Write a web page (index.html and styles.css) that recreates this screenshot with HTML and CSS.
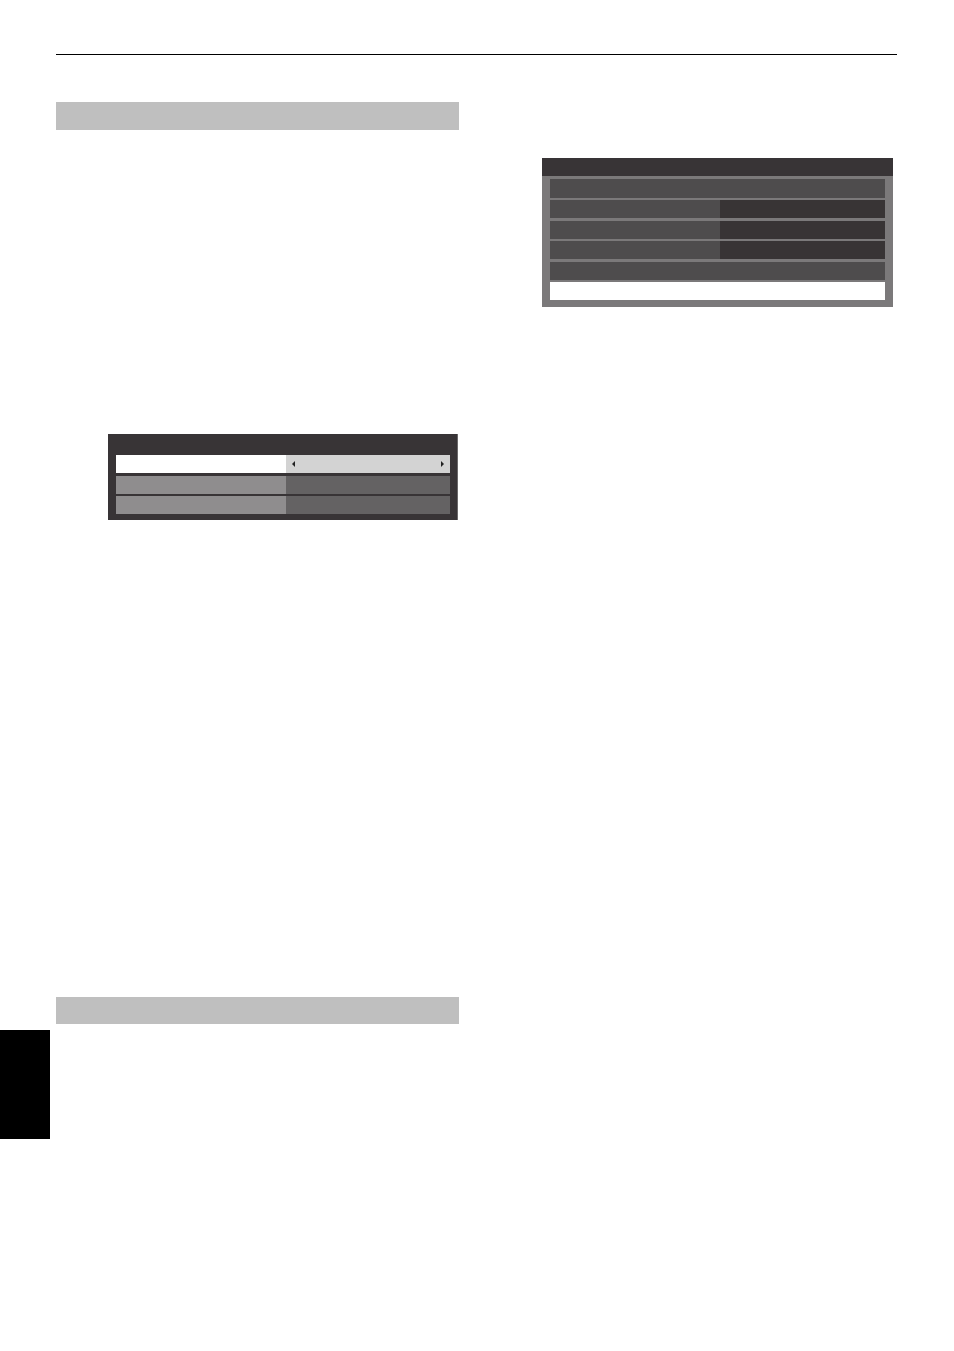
FILE: index.html
```html
<!DOCTYPE html>
<html lang="en">
<head>
  <meta charset="UTF-8">
  <meta name="viewport" content="width=device-width, initial-scale=1.0">
  <title>Manual page</title>
  <link rel="stylesheet" href="styles.css">
</head>
<body>
  <div class="page">
    <div class="rule"></div>
    <div class="columns">
      <div class="rail">
        <div class="tab"></div>
      </div>

      <div class="col-left">
        <div class="heading-bar"></div>

        <div class="menu-small">
          <div class="menu-row">
            <div class="cell-label active"></div>
            <div class="cell-value select">
              <span class="arrow arrow-left"></span>
              <span class="arrow arrow-right"></span>
            </div>
          </div>
          <div class="menu-row">
            <div class="cell-label"></div>
            <div class="cell-value"></div>
          </div>
          <div class="menu-row">
            <div class="cell-label"></div>
            <div class="cell-value"></div>
          </div>
        </div>

        <div class="heading-bar second"></div>
      </div>

      <div class="col-right">
        <div class="menu-large">
          <div class="menu-title"></div>
          <div class="menu-body">
            <div class="wide-row first"></div>
            <div class="split-row">
              <div class="split-label"></div>
              <div class="split-value"></div>
            </div>
            <div class="split-row">
              <div class="split-label"></div>
              <div class="split-value"></div>
            </div>
            <div class="split-row">
              <div class="split-label"></div>
              <div class="split-value"></div>
            </div>
            <div class="wide-row"></div>
            <div class="wide-row highlight"></div>
          </div>
        </div>
      </div>
    </div>
  </div>
</body>
</html>
```

FILE: styles.css
```css
body {
  margin: 0;
  padding: 0;
  background: #fff;
  font-family: "Liberation Sans", Arial, sans-serif;
}
.page {
  width: 954px;
  height: 1351px;
  padding-top: 54px;
  box-sizing: border-box;
}
.rule {
  margin: 0 57px 0 56px;
  border-top: 1px solid #000;
}
.columns {
  display: flex;
}
.rail {
  width: 50px;
  flex: none;
}
.tab {
  margin-top: 975px;
  height: 109px;
  background: #000;
}
.col-left {
  width: 403px;
  margin-left: 6px;
  flex: none;
}
.col-right {
  width: 351px;
  margin-left: 83px;
  flex: none;
}
.heading-bar {
  margin-top: 47px;
  height: 28px;
  background: #bfbfbf;
}
.heading-bar.second {
  margin-top: 477px;
  height: 27px;
}

/* small menu, left column */
.menu-small {
  margin: 304px 0 0 52px;
  width: 350px;
  box-sizing: border-box;
  padding: 21px 7px 6px 8px;
  background: #383436;
  border-right: 1px solid #6b696a;
  display: flex;
  flex-direction: column;
  gap: 2.5px;
}
.menu-row {
  display: flex;
  height: 18px;
}
.cell-label {
  width: 170px;
  background: #8f8d8e;
}
.cell-label.active {
  background: #fff;
}
.cell-value {
  flex: 1;
  background: #646263;
}
.cell-value.select {
  background: #d3d3d3;
  display: flex;
  align-items: center;
  justify-content: space-between;
  padding: 0 6px;
}
.arrow {
  width: 0;
  height: 0;
  border-top: 3px solid transparent;
  border-bottom: 3px solid transparent;
}
.arrow-left {
  border-right: 3px solid #222;
}
.arrow-right {
  border-left: 3px solid #222;
}

/* large menu, right column */
.menu-large {
  margin-top: 103px;
  width: 351px;
}
.menu-title {
  height: 18px;
  background: #383436;
}
.menu-body {
  background: #7b797a;
  padding: 3px 8px 7px 8px;
  display: flex;
  flex-direction: column;
  gap: 2.4px;
}
.wide-row {
  height: 18px;
  background: #4e4c4d;
}
.wide-row.first {
  height: 19px;
}
.wide-row.highlight {
  background: #fff;
}
.split-row {
  display: flex;
  height: 18px;
}
.split-label {
  width: 170px;
  background: #4e4c4d;
}
.split-value {
  flex: 1;
  background: #383435;
}
```
